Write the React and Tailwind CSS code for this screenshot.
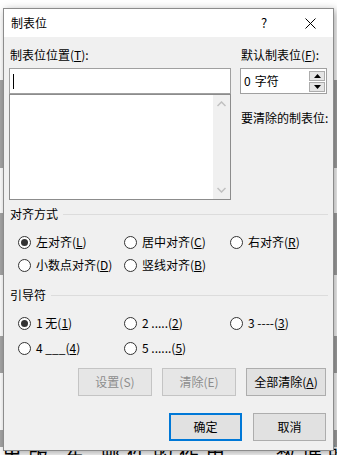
import React from 'react';

const FONT = "font-['Microsoft_YaHei_UI','Noto_Sans_CJK_SC','Noto_Sans',sans-serif]";

function Radio({ checked, children }) {
    return (
        <div className="flex items-center gap-[5px] h-4">
            <span className="w-[13px] h-[13px] rounded-full border border-[#333333] bg-white flex items-center justify-center shrink-0">
                {checked && <span className="w-[7px] h-[7px] rounded-full bg-[#333333]" />}
            </span>
            <span className="leading-4 whitespace-nowrap">{children}</span>
        </div>
    );
}

function GroupLabel({ children }) {
    return (
        <div className="flex items-center h-4">
            <span className="leading-4 pl-px">{children}</span>
            <div className="flex-1 h-px bg-[#dcdcdc] ml-[5px]" />
        </div>
    );
}

function Button({ children, disabled, primary, width }) {
    let cls = 'border-[#adadad] bg-[#e1e1e1] text-black';
    if (disabled) cls = 'border-[#c4c4c4] bg-[#e6e6e6] text-[#8d8d8d]';
    if (primary) cls = 'border-2 border-[#0078d7] bg-[#e1e1e1] text-black';
    return (
        <div className={`${width} h-[28px] border flex items-center justify-center leading-4 ${cls}`}>
            {children}
        </div>
    );
}

export default function App() {
    return (
        <div className={`relative w-[337px] h-[455px] overflow-hidden bg-white text-[12px] text-black ${FONT}`}>
            {/* document behind the dialog */}
            <div className="flex flex-col">
                <div className="h-[80px]" />
                <div className="h-[88px] bg-[#a6a6a6]" />
                <div className="h-[45px]" />
                <div className="h-[62px] bg-[#a6a6a6]" />
                <div className="h-[61px]" />
                <div className="h-[37px] bg-[#a6a6a6]" />
                <div className="h-[57px]" />
                <div className="h-[17px] bg-[#a6a6a6]" />
                <div className="-mt-[5px] text-[20px] leading-[26px] tracking-[6px] whitespace-nowrap pl-[2px]">
                    出版 东 邮件的作用 — 数据的运行
                </div>
            </div>

            {/* dialog */}
            <div className="absolute left-[3px] top-[8px] w-[331px] h-[443px] border border-[#8c8c8c] bg-[#f0f0f0] shadow-[2px_2px_8px_rgba(0,0,0,0.35)] flex flex-col">
                {/* title bar */}
                <div className="h-[28px] bg-white flex items-center pl-[7px] shrink-0">
                    <span className="leading-4">制表位</span>
                    <span className="ml-auto w-[10px] text-center leading-4 text-[13px] mr-[36px]">?</span>
                    <svg className="mr-[17px]" width="11" height="11" viewBox="0 0 11 11">
                        <path d="M0.5 0.5 L10.5 10.5 M10.5 0.5 L0.5 10.5" stroke="#000" strokeWidth="1" />
                    </svg>
                </div>

                {/* body */}
                <div className="flex flex-col pt-[10px] px-[5px]">
                    <div className="flex gap-[9px]">
                        <div className="w-[222px] flex flex-col">
                            <span className="leading-4 pl-px">制表位位置(<u>T</u>):</span>
                            <div className="mt-[5px] h-[26px] bg-white border border-[#a0a0a0] flex items-center pl-[3px]">
                                <div className="w-px h-[15px] bg-black" />
                            </div>
                            <div className="h-[106px] bg-white border border-[#8c8c8c] flex justify-end">
                                <div className="w-[17px] bg-[#f0f0f0] flex flex-col items-center justify-between py-[6px]">
                                    <svg width="9" height="6" viewBox="0 0 9 6">
                                        <path d="M0.5 5 L4.5 1 L8.5 5" fill="none" stroke="#c0c0c0" strokeWidth="1.5" />
                                    </svg>
                                    <svg width="9" height="6" viewBox="0 0 9 6">
                                        <path d="M0.5 1 L4.5 5 L8.5 1" fill="none" stroke="#c0c0c0" strokeWidth="1.5" />
                                    </svg>
                                </div>
                            </div>
                        </div>
                        <div className="w-[87px] flex flex-col">
                            <span className="leading-4 pl-px">默认制表位(<u>F</u>):</span>
                            <div className="mt-[5px] h-[26px] bg-white border border-[#a0a0a0] flex items-center pl-[3px] pr-px">
                                <span className="leading-4 flex gap-[4px]"><span>0</span><span>字符</span></span>
                                <div className="ml-auto flex flex-col gap-px">
                                    <div className="w-[16px] h-[10px] bg-[#e5e5e5] border border-[#acacac] flex items-center justify-center">
                                        <svg width="7" height="4" viewBox="0 0 7 4"><path d="M0 4 L3.5 0 L7 4 Z" fill="#000" /></svg>
                                    </div>
                                    <div className="w-[16px] h-[10px] bg-[#e5e5e5] border border-[#acacac] flex items-center justify-center">
                                        <svg width="7" height="4" viewBox="0 0 7 4"><path d="M0 0 L3.5 4 L7 0 Z" fill="#000" /></svg>
                                    </div>
                                </div>
                            </div>
                            <span className="mt-[16px] leading-4 pl-px whitespace-nowrap">要清除的制表位:</span>
                        </div>
                    </div>

                    {/* alignment */}
                    <div className="mt-[6px]">
                        <GroupLabel>对齐方式</GroupLabel>
                    </div>
                    <div className="mt-[12px] ml-[9px] grid grid-cols-[106px_106px_1fr] gap-y-[7px]">
                        <Radio checked>左对齐(<u>L</u>)</Radio>
                        <Radio>居中对齐(<u>C</u>)</Radio>
                        <Radio>右对齐(<u>R</u>)</Radio>
                        <Radio>小数点对齐(<u>D</u>)</Radio>
                        <Radio>竖线对齐(<u>B</u>)</Radio>
                    </div>

                    {/* leader */}
                    <div className="mt-[14px]">
                        <GroupLabel>引导符</GroupLabel>
                    </div>
                    <div className="mt-[12px] ml-[9px] grid grid-cols-[106px_106px_1fr] gap-y-[9px]">
                        <Radio checked>1 无(<u>1</u>)</Radio>
                        <Radio>2 .....(<u>2</u>)</Radio>
                        <Radio>3 ----(<u>3</u>)</Radio>
                        <Radio>4 ___(<u>4</u>)</Radio>
                        <Radio>5 ......(<u>5</u>)</Radio>
                    </div>

                    {/* buttons */}
                    <div className="mt-[12px] flex justify-end gap-[10px] pr-[2px]">
                        <Button disabled width="w-[74px]">设置(S)</Button>
                        <Button disabled width="w-[74px]">清除(E)</Button>
                        <Button width="w-[80px]">全部清除(<u>A</u>)</Button>
                    </div>
                    <div className="mt-[17px] flex justify-end gap-[11px] pr-[2px]">
                        <Button primary width="w-[73px]">确定</Button>
                        <Button width="w-[73px]">取消</Button>
                    </div>
                </div>
            </div>
        </div>
    );
}
